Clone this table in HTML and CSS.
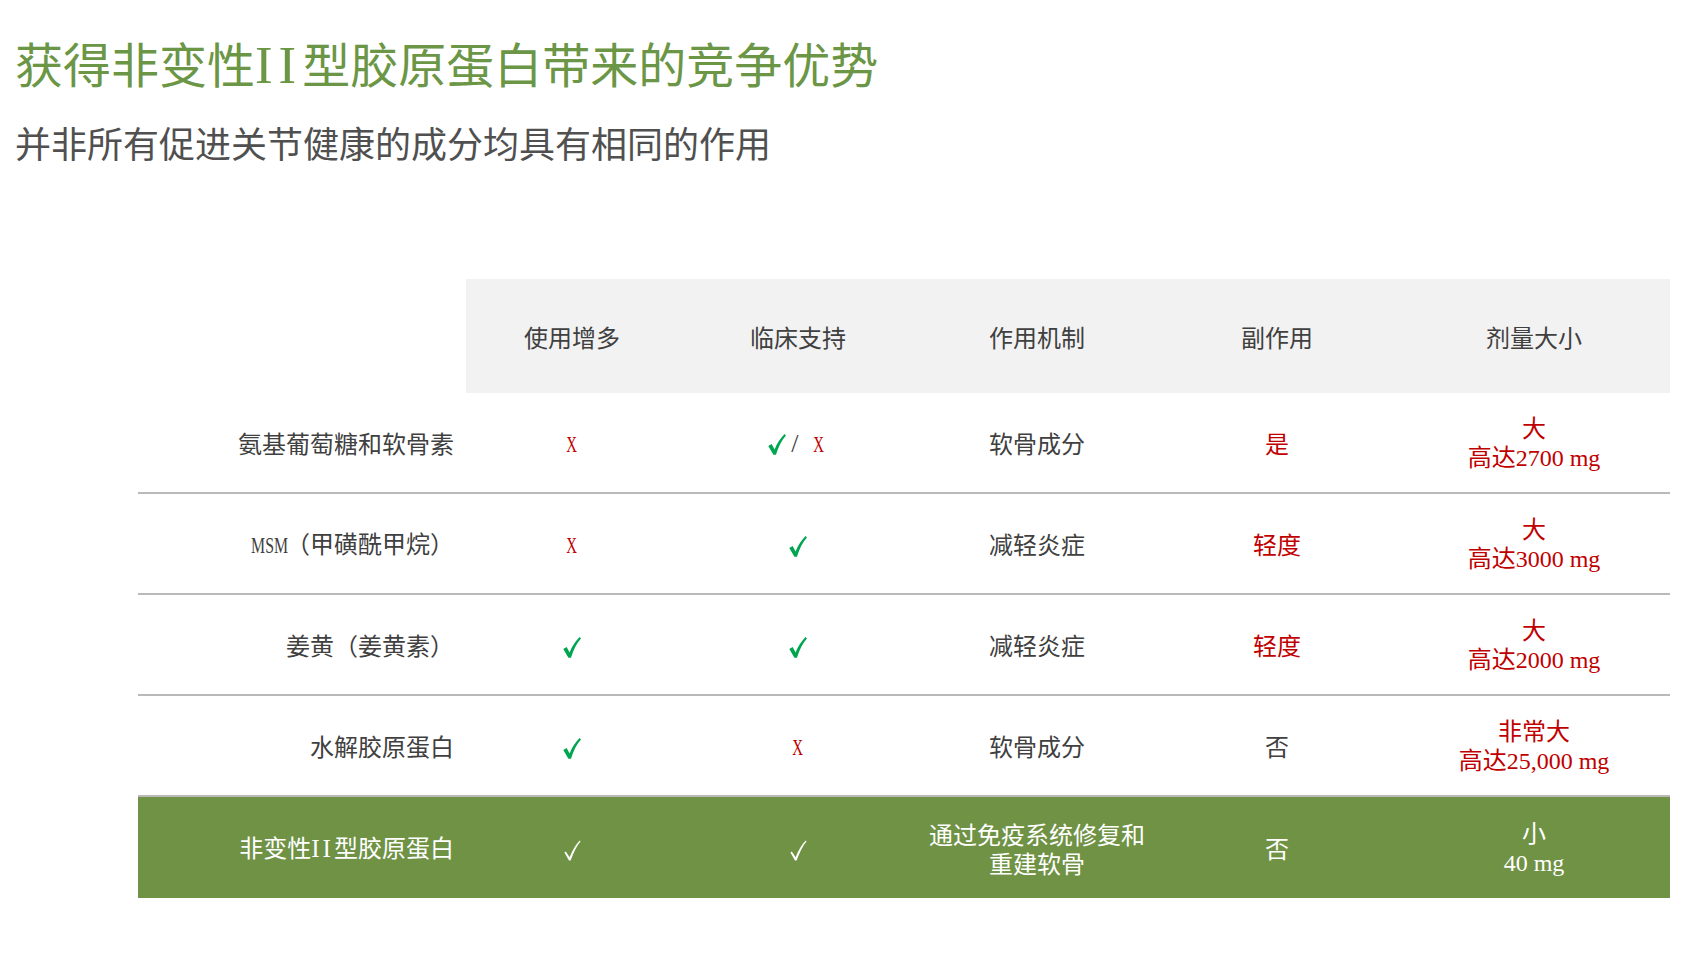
FILE: index.html
```html
<!DOCTYPE html>
<html lang="zh-CN">
<head>
<meta charset="utf-8">
<title>获得非变性II型胶原蛋白带来的竞争优势</title>
<link rel="stylesheet" href="styles.css">
</head>
<body>
<div class="page">
  <h1 class="title">获得非变性<span class="roman">II</span>型胶原蛋白带来的竞争优势</h1>
  <p class="subtitle">并非所有促进关节健康的成分均具有相同的作用</p>

  <table class="compare">
    <colgroup>
      <col class="c-label">
      <col class="c1">
      <col class="c2">
      <col class="c3">
      <col class="c4">
      <col class="c5">
    </colgroup>
    <thead>
      <tr>
        <th class="blank"></th>
        <th>使用增多</th>
        <th>临床支持</th>
        <th>作用机制</th>
        <th>副作用</th>
        <th>剂量大小</th>
      </tr>
    </thead>
    <tbody>
      <tr class="row">
        <td class="label">氨基葡萄糖和软骨素</td>
        <td><span class="x">X</span></td>
        <td><svg class="check" viewBox="0 0 18 21" aria-label="✓"><path d="M0.3 12 L3.6 10 L6.6 15.4 C9.2 9 12.6 4 16.6 0 L18 1.4 C13.8 6 10.4 12.4 8 20.8 L5.4 20.8 Z"/></svg><span class="slash">/</span><span class="x">X</span></td>
        <td>软骨成分</td>
        <td class="red">是</td>
        <td class="red">大<br>高达<span class="lat">2700 mg</span></td>
      </tr>
      <tr class="row">
        <td class="label"><span class="msm">MSM</span>（甲磺酰甲烷）</td>
        <td><span class="x">X</span></td>
        <td><svg class="check" viewBox="0 0 18 21" aria-label="✓"><path d="M0.3 12 L3.6 10 L6.6 15.4 C9.2 9 12.6 4 16.6 0 L18 1.4 C13.8 6 10.4 12.4 8 20.8 L5.4 20.8 Z"/></svg></td>
        <td>减轻炎症</td>
        <td class="red">轻度</td>
        <td class="red">大<br>高达<span class="lat">3000 mg</span></td>
      </tr>
      <tr class="row">
        <td class="label">姜黄（姜黄素）</td>
        <td><svg class="check" viewBox="0 0 18 21" aria-label="✓"><path d="M0.3 12 L3.6 10 L6.6 15.4 C9.2 9 12.6 4 16.6 0 L18 1.4 C13.8 6 10.4 12.4 8 20.8 L5.4 20.8 Z"/></svg></td>
        <td><svg class="check" viewBox="0 0 18 21" aria-label="✓"><path d="M0.3 12 L3.6 10 L6.6 15.4 C9.2 9 12.6 4 16.6 0 L18 1.4 C13.8 6 10.4 12.4 8 20.8 L5.4 20.8 Z"/></svg></td>
        <td>减轻炎症</td>
        <td class="red">轻度</td>
        <td class="red">大<br>高达<span class="lat">2000 mg</span></td>
      </tr>
      <tr class="row">
        <td class="label">水解胶原蛋白</td>
        <td><svg class="check" viewBox="0 0 18 21" aria-label="✓"><path d="M0.3 12 L3.6 10 L6.6 15.4 C9.2 9 12.6 4 16.6 0 L18 1.4 C13.8 6 10.4 12.4 8 20.8 L5.4 20.8 Z"/></svg></td>
        <td><span class="x">X</span></td>
        <td>软骨成分</td>
        <td>否</td>
        <td class="red">非常大<br>高达<span class="lat">25,000 mg</span></td>
      </tr>
      <tr class="row hl">
        <td class="label">非变性<span class="roman-s">II</span>型胶原蛋白</td>
        <td><svg class="check" viewBox="0 0 18 21" aria-label="✓"><path d="M1.4 12.4 L2.8 11.4 L6.6 17.2 C9.4 10 12.8 4.4 16.8 0.4 L17.6 1.2 C13.8 5.8 10.6 12.2 7.6 20.6 L6 20.6 Z"/></svg></td>
        <td><svg class="check" viewBox="0 0 18 21" aria-label="✓"><path d="M1.4 12.4 L2.8 11.4 L6.6 17.2 C9.4 10 12.8 4.4 16.8 0.4 L17.6 1.2 C13.8 5.8 10.6 12.2 7.6 20.6 L6 20.6 Z"/></svg></td>
        <td>通过免疫系统修复和<br>重建软骨</td>
        <td>否</td>
        <td>小<br><span class="lat">40 mg</span></td>
      </tr>
    </tbody>
  </table>
</div>
</body>
</html>
```

FILE: styles.css
```css
html, body {
  margin: 0;
  padding: 0;
  background: #ffffff;
}

body {
  font-family: "Noto Sans CJK SC", "Noto Sans", sans-serif;
  color: #404040;
}

.page {
  padding: 33px 26px 40px 15px;
}

.lat {
  font-family: "Liberation Serif", "Noto Sans CJK SC", serif;
  font-size: 1em;
}

.roman {
  font-family: "Liberation Serif", serif;
  font-size: 1.1em;
  letter-spacing: 6px;
  font-weight: 400;
}

.roman-s {
  font-family: "Liberation Serif", serif;
  font-size: 1.05em;
  letter-spacing: 3px;
}

.msm {
  display: inline-block;
  font-family: "Liberation Serif", serif;
  transform: scaleX(0.66);
  transform-origin: right center;
  margin-left: -18px;
  margin-right: -2px;
}

.title {
  margin: 0;
  font-size: 48px;
  line-height: 58px;
  font-weight: 400;
  color: #6b9645;
}

.subtitle {
  margin: 26px 0 0;
  font-size: 36px;
  line-height: 44px;
  color: #505050;
}

.compare {
  margin: 115px 0 0 123px;
  width: 1532px;
  table-layout: fixed;
  border-collapse: separate;
  border-spacing: 0;
  font-size: 24px;
  line-height: 29px;
}

.c-label { width: 328px; }
.c1 { width: 212px; }
.c2 { width: 240px; }
.c3 { width: 238px; }
.c4 { width: 242px; }
.c5 { width: 272px; }

.compare th {
  height: 114px;
  padding: 0;
  background: #f2f2f2;
  font-weight: 400;
  color: #404040;
  text-align: center;
  vertical-align: middle;
}

.compare th.blank {
  background: #ffffff;
}

.compare td {
  height: 99px;
  padding: 0 4px;
  text-align: center;
  vertical-align: middle;
  border-bottom: 2px solid #b9b9b9;
  color: #404040;
}

.compare td.label {
  text-align: right;
  padding: 0 12px 0 0;
}

.compare td.red {
  color: #c00000;
}

.x {
  display: inline-block;
  font-family: "Liberation Serif", serif;
  color: #c00000;
  transform: scaleX(0.62);
}

.check {
  display: inline-block;
  width: 18px;
  height: 21px;
  vertical-align: -3px;
  fill: #00a550;
}

.slash {
  display: inline-block;
  font-family: "Liberation Serif", serif;
  font-size: 26px;
  color: #404040;
  margin: 0 12px 0 5px;
}

.compare tr.hl td {
  background: #6f9245;
  color: #ffffff;
  border-bottom: none;
  height: 101px;
}

.compare tr.hl .check {
  fill: #ffffff;
}
```
